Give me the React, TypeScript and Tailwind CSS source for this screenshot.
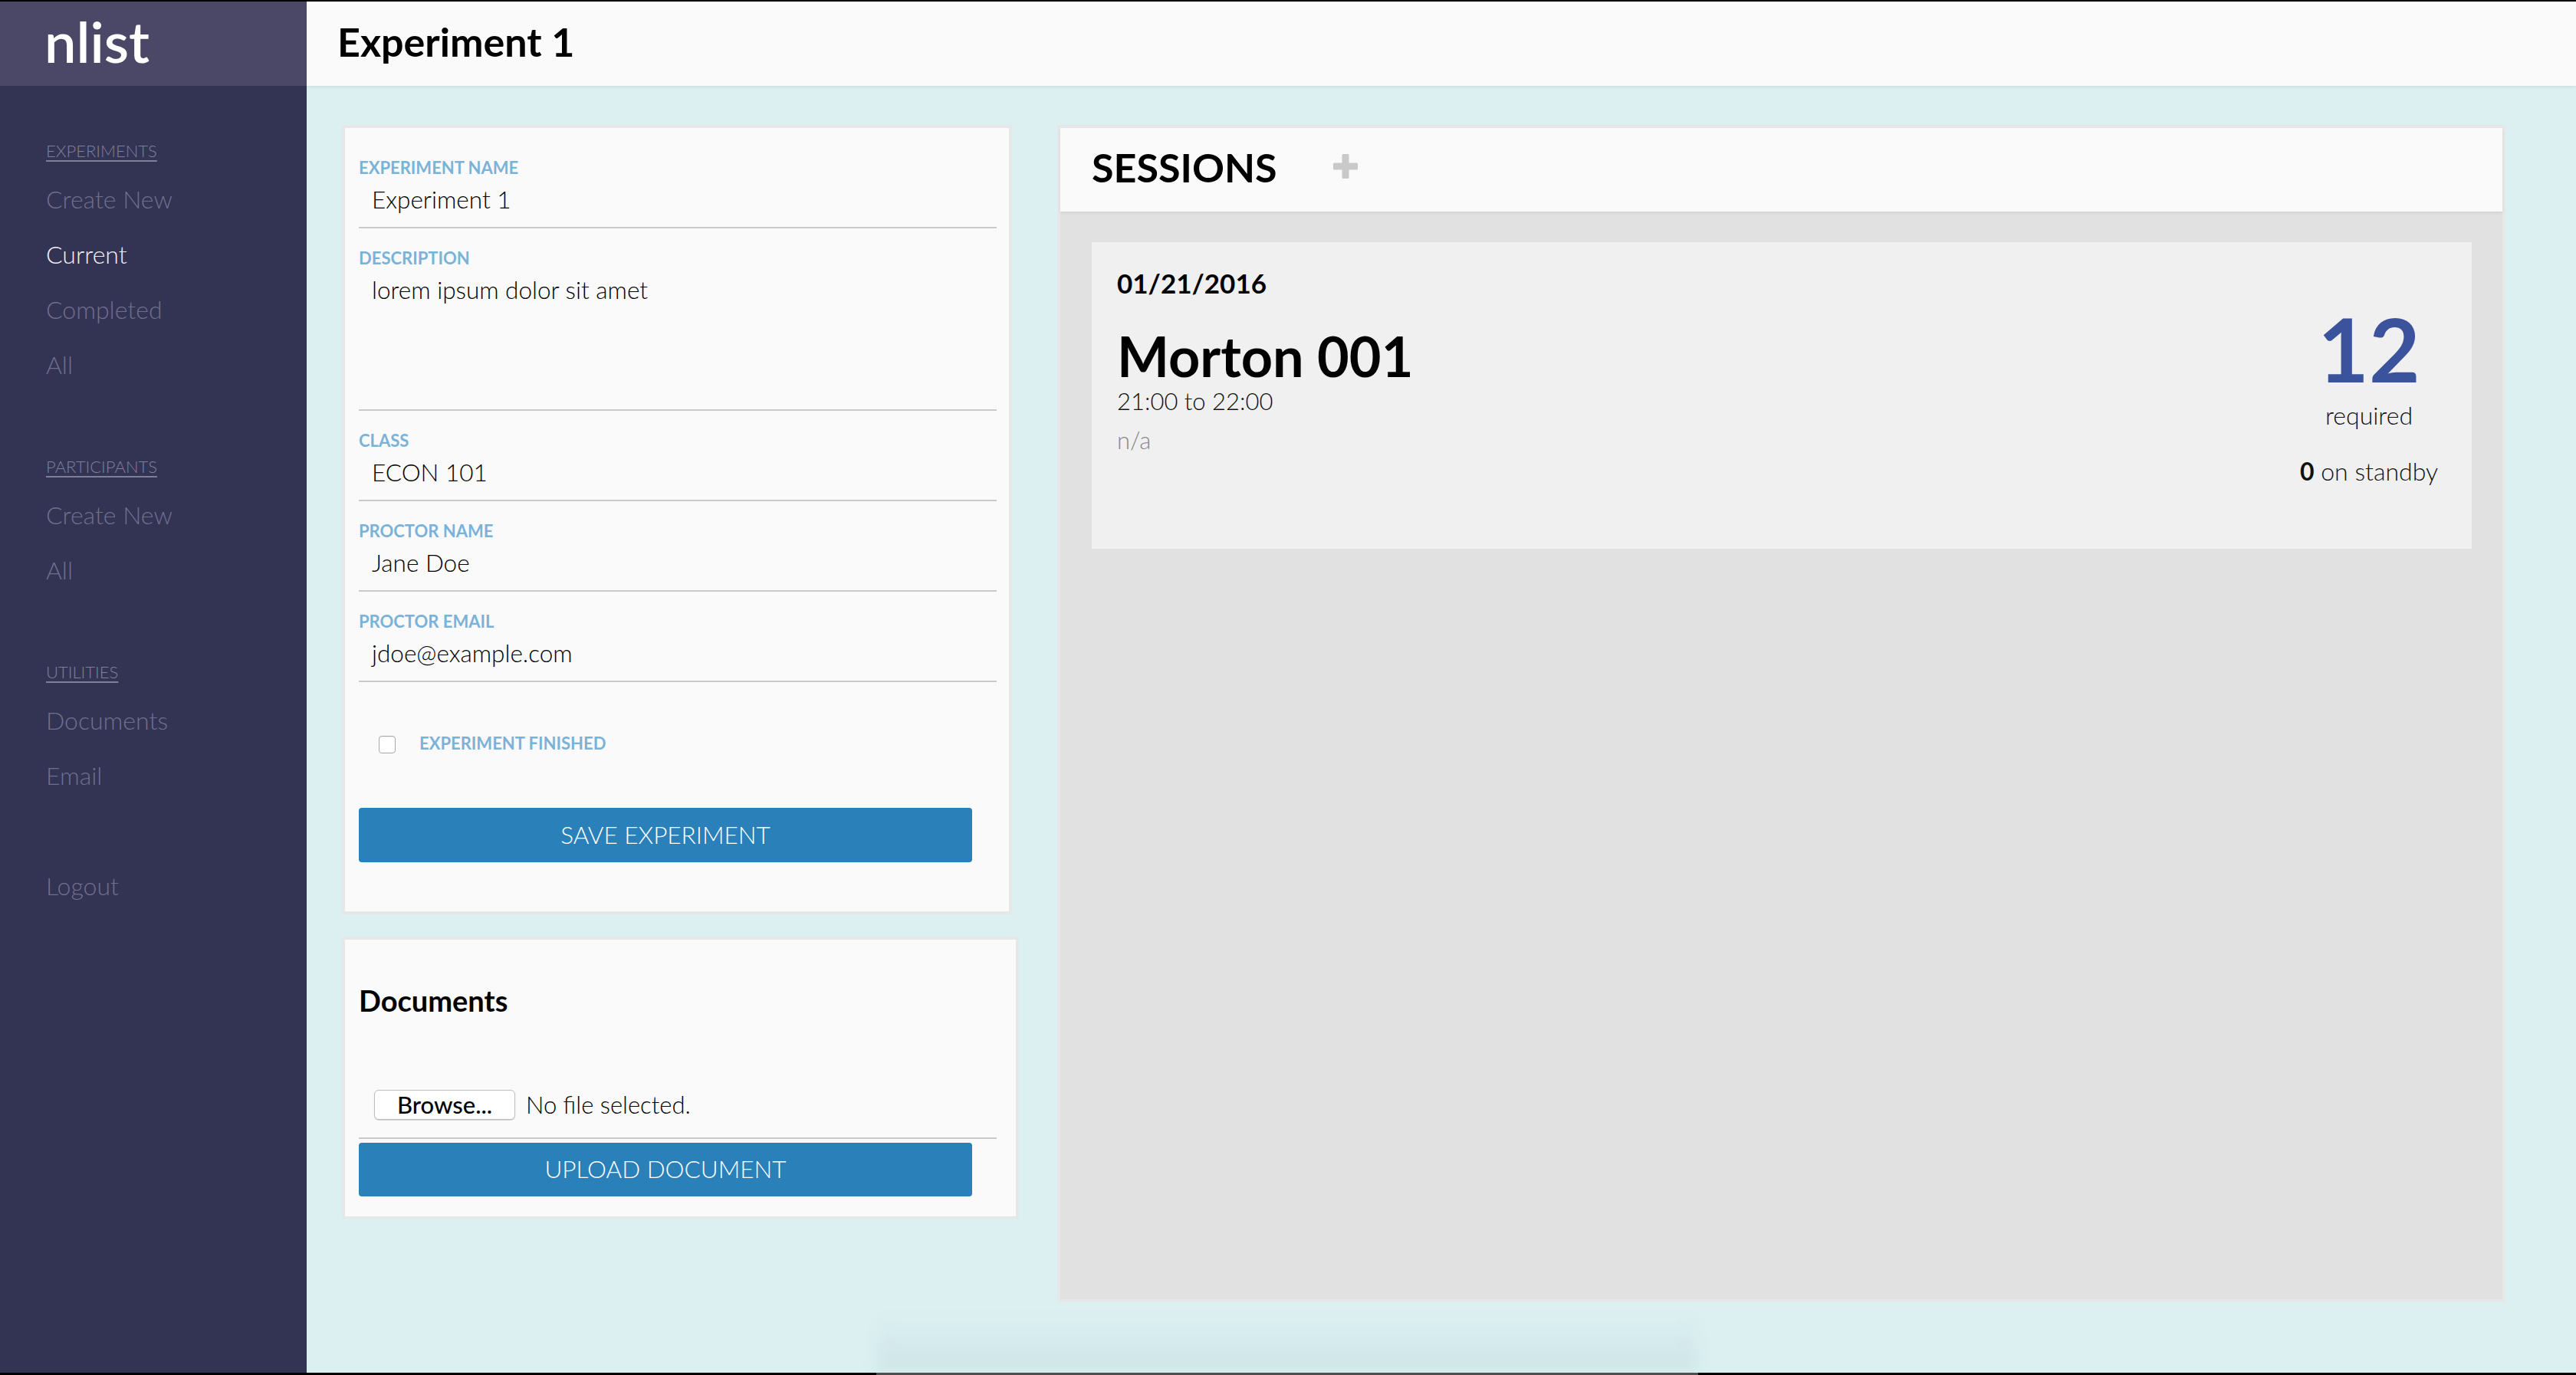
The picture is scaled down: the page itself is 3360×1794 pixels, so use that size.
import React from "react";

function NavLabel({ children }: { children: React.ReactNode }) {
  return (
    <div className="text-[22px] leading-[40px] font-light text-[#7f7f9a] underline underline-offset-[4px] decoration-[1.5px] mb-[7px]">
      {children}
    </div>
  );
}

function NavItem({ children, active }: { children: React.ReactNode; active?: boolean }) {
  return (
    <div
      className={
        active
          ? "text-[32px] leading-[72px] font-light text-[#f0f0f4]"
          : "text-[32px] leading-[72px] font-light text-[#6f6f8d]"
      }
    >
      {children}
    </div>
  );
}

function Field({ label, value, tall }: { label: string; value: string; tall?: boolean }) {
  return (
    <div className="border-b-2 border-[#c9c9c9] pb-[16px] mb-[27px]">
      <div className="text-[22px] leading-[24px] font-bold text-[#7bb2d7]">{label}</div>
      <div
        className={
          tall
            ? "mt-[9px] h-[160px] pl-[17px] text-[31.5px] leading-[40px] font-light text-black"
            : "mt-[9px] h-[40px] pl-[17px] text-[31.5px] leading-[40px] font-light text-black"
        }
      >
        {value}
      </div>
    </div>
  );
}

export default function App() {
  return (
    <div className="w-[3360px] h-[1794px] relative overflow-hidden flex flex-col bg-black font-['Lato',sans-serif]">
      <div className="h-[2px] bg-black" />
      <div className="flex h-[1789px]">
        {/* Sidebar */}
        <aside className="w-[400px] flex flex-col bg-[#333354]">
          <div className="h-[110px] bg-[#4a4866] pl-[58px] text-white text-[74px] font-semibold leading-[104px]">
            nlist
          </div>
          <nav className="pt-[65px] pl-[60px] flex flex-col">
            <NavLabel>EXPERIMENTS</NavLabel>
            <NavItem>Create New</NavItem>
            <NavItem active>Current</NavItem>
            <NavItem>Completed</NavItem>
            <NavItem>All</NavItem>
            <div className="h-[77px]" />
            <NavLabel>PARTICIPANTS</NavLabel>
            <NavItem>Create New</NavItem>
            <NavItem>All</NavItem>
            <div className="h-[77px]" />
            <NavLabel>UTILITIES</NavLabel>
            <NavItem>Documents</NavItem>
            <NavItem>Email</NavItem>
            <div className="h-[72px]" />
            <NavItem>Logout</NavItem>
          </nav>
        </aside>

        {/* Main */}
        <main className="flex-1 flex flex-col bg-[#dcf0f2]">
          <header className="relative z-10 h-[110px] bg-[#fafafa] pl-[40px] text-[52px] font-bold leading-[104px] text-black shadow-[0_2px_3px_rgba(0,40,50,0.07)]">
            Experiment 1
          </header>

          <div className="flex gap-[50px] pl-[46px] pt-[51px]">
            {/* Left column */}
            <div className="w-[883px] flex flex-col gap-[29px]">
              <section className="w-[874px] border-4 border-[#e6e7e7] bg-[#fafafa] pl-[18px] pr-[16px] pt-[40px] pb-[64px]">
                <Field label="EXPERIMENT NAME" value="Experiment 1" />
                <Field label="DESCRIPTION" value="lorem ipsum dolor sit amet" tall />
                <Field label="CLASS" value="ECON 101" />
                <Field label="PROCTOR NAME" value="Jane Doe" />
                <Field label="PROCTOR EMAIL" value="jdoe@example.com" />
                <div className="mt-[70px] h-[24px] flex items-start">
                  <div className="ml-[26px] w-[22px] h-[23px] rounded-[4px] border border-[#a9a9a9] bg-white shadow-[inset_0_1px_1px_rgba(0,0,0,0.08)]" />
                  <div className="ml-[31px] text-[22px] leading-[18px] mt-[1px] font-bold text-[#7bb2d7]">
                    EXPERIMENT FINISHED
                  </div>
                </div>
                <button className="mt-[70px] w-[800px] h-[71px] rounded-[4px] bg-[#2a80b9] text-white text-[31.5px] font-light flex items-center justify-center">
                  SAVE EXPERIMENT
                </button>
              </section>

              <section className="w-full border-4 border-[#e6e7e7] bg-[#fafafa] pl-[18px] pr-[25px] pt-[56px] pb-[26px]">
                <h2 className="text-[38px] leading-[46px] font-bold text-black">Documents</h2>
                <div className="mt-[94px] pb-[23px] border-b-2 border-[#c9c9c9] flex items-center">
                  <div className="ml-[20px] w-[184px] h-[39px] rounded-[6px] border border-[#bdbdbd] bg-white shadow-[0_1px_1px_rgba(0,0,0,0.15)] flex items-center justify-center text-[31px] font-medium text-black leading-none">
                    Browse...
                  </div>
                  <div className="ml-[14px] text-[31px] font-light text-black leading-none">No file selected.</div>
                </div>
                <button className="mt-[5px] w-[800px] h-[70px] rounded-[4px] bg-[#2a80b9] text-white text-[31.5px] font-light flex items-center justify-center">
                  UPLOAD DOCUMENT
                </button>
              </section>
            </div>

            {/* Sessions */}
            <section className="w-[1889px] h-[1536px] border-4 border-[#e6e7e7] bg-[#e1e1e1] flex flex-col">
              <div className="relative z-10 h-[109px] bg-[#fafafa] pl-[41px] pt-[25px] flex items-start shadow-[0_2px_4px_rgba(0,0,0,0.07)]">
                <div className="text-[52px] leading-[52px] font-bold text-black">SESSIONS</div>
                <svg className="ml-[73px] mt-[9px]" width="32" height="32" viewBox="0 0 32 32">
                  <rect x="11.5" y="0" width="9" height="32" rx="1.5" fill="#c9c9c9" />
                  <rect x="0" y="11.5" width="32" height="9" rx="1.5" fill="#c9c9c9" />
                </svg>
              </div>
              <div className="pl-[41px] pr-[40px] pt-[40px]">
                <div className="h-[400px] bg-[#f0f0f0] flex justify-between">
                  <div className="pl-[33px] pt-[33px] flex flex-col">
                    <div className="text-[35px] leading-[40px] font-bold text-black">01/21/2016</div>
                    <div className="mt-[35px] text-[72px] leading-[80px] font-bold text-black">Morton 001</div>
                    <div className="mt-[1px] text-[31px] leading-[36px] font-light text-[#111]">21:00 to 22:00</div>
                    <div className="mt-[15px] text-[31px] leading-[36px] font-light text-[#888]">n/a</div>
                  </div>
                  <div className="pr-[44px] pt-[78px] flex flex-col items-center text-center">
                    <div className="text-[115px] leading-[120px] font-bold text-[#3b539c]">12</div>
                    <div className="mt-[10px] text-[32px] leading-[36px] font-light text-[#111]">required</div>
                    <div className="mt-[37px] text-[32px] leading-[36px] font-light text-[#111]">
                      <span className="font-bold">0</span> on standby
                    </div>
                  </div>
                </div>
              </div>
            </section>
          </div>
        </main>
      </div>
      <div className="h-[3px] bg-black" />
      {/* dock shadow overlay */}
      <div className="absolute left-[1143px] bottom-[3px] w-[1072px] h-[80px] bg-gradient-to-b from-transparent to-[rgba(0,50,60,0.06)] blur-[10px]" />
      <div className="absolute left-[1143px] bottom-0 w-[1072px] h-[3px] bg-[#4e4e4e]" />
    </div>
  );
}
